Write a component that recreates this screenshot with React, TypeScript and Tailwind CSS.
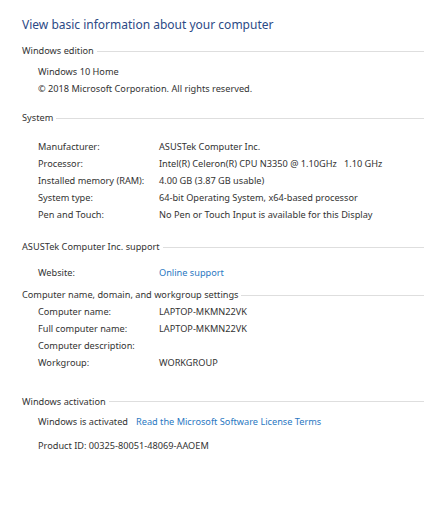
import React from "react";

const font = { fontFamily: '"Noto Sans", "Open Sans", sans-serif' };

function Header({ title, className }: { title: string; className?: string }) {
  return (
    <div className={`flex items-center h-[16px] ${className ?? ""}`}>
      <span className="text-[9.2px] text-[#333] whitespace-nowrap">{title}</span>
      <div className="flex-1 ml-[3px] h-px bg-[#dedede]" />
    </div>
  );
}

function Row({ label, value, link }: { label: string; value?: string; link?: boolean }) {
  return (
    <div className="flex items-center h-[17px] pl-[16px] text-[9.2px]">
      <span className="w-[121px] shrink-0 text-[#333] whitespace-nowrap">{label}</span>
      {value && (
        <span className={`whitespace-pre ${link ? "text-[#2a78c2]" : "text-[#333]"}`}>{value}</span>
      )}
    </div>
  );
}

function Line({ children, className }: { children: React.ReactNode; className?: string }) {
  return (
    <div className={`flex items-center h-[17px] pl-[16px] text-[9.2px] text-[#333] whitespace-nowrap ${className ?? ""}`}>
      {children}
    </div>
  );
}

export default function App() {
  return (
    <div className="w-[424px] h-[512px] bg-white overflow-hidden pl-[22px]" style={font}>
      <div className="pt-[15px] h-[35px] flex items-start">
        <div className="h-[20px] flex items-center text-[12px] text-[#2c4a86]">
          View basic information about your computer
        </div>
      </div>
      <Header title="Windows edition" className="mt-[8px]" />
      <Line className="mt-[4px]">Windows 10 Home</Line>
      <Line>© 2018 Microsoft Corporation. All rights reserved.</Line>

      <Header title="System" className="mt-[13px]" />
      <div className="mt-[12.5px]">
        <Row label="Manufacturer:" value="ASUSTek Computer Inc." />
        <Row label="Processor:" value="Intel(R) Celeron(R) CPU N3350 @ 1.10GHz   1.10 GHz" />
        <Row label="Installed memory (RAM):" value="4.00 GB (3.87 GB usable)" />
        <Row label="System type:" value="64-bit Operating System, x64-based processor" />
        <Row label="Pen and Touch:" value="No Pen or Touch Input is available for this Display" />
      </div>

      <Header title="ASUSTek Computer Inc. support" className="mt-[15.5px]" />
      <div className="mt-[9.5px]">
        <Row label="Website:" value="Online support" link />
      </div>

      <Header title="Computer name, domain, and workgroup settings" className="mt-[5.5px]" />
      <div>
        <Row label="Computer name:" value="LAPTOP-MKMN22VK" />
        <Row label="Full computer name:" value="LAPTOP-MKMN22VK" />
        <Row label="Computer description:" />
        <Row label="Workgroup:" value="WORKGROUP" />
      </div>

      <Header title="Windows activation" className="mt-[22.5px]" />
      <Line className="mt-[3.5px]">
        <span>Windows is activated</span>
        <span className="ml-[8px] text-[#2a78c2]">Read the Microsoft Software License Terms</span>
      </Line>
      <Line className="mt-[7px]">Product ID: 00325-80051-48069-AAOEM</Line>
    </div>
  );
}
